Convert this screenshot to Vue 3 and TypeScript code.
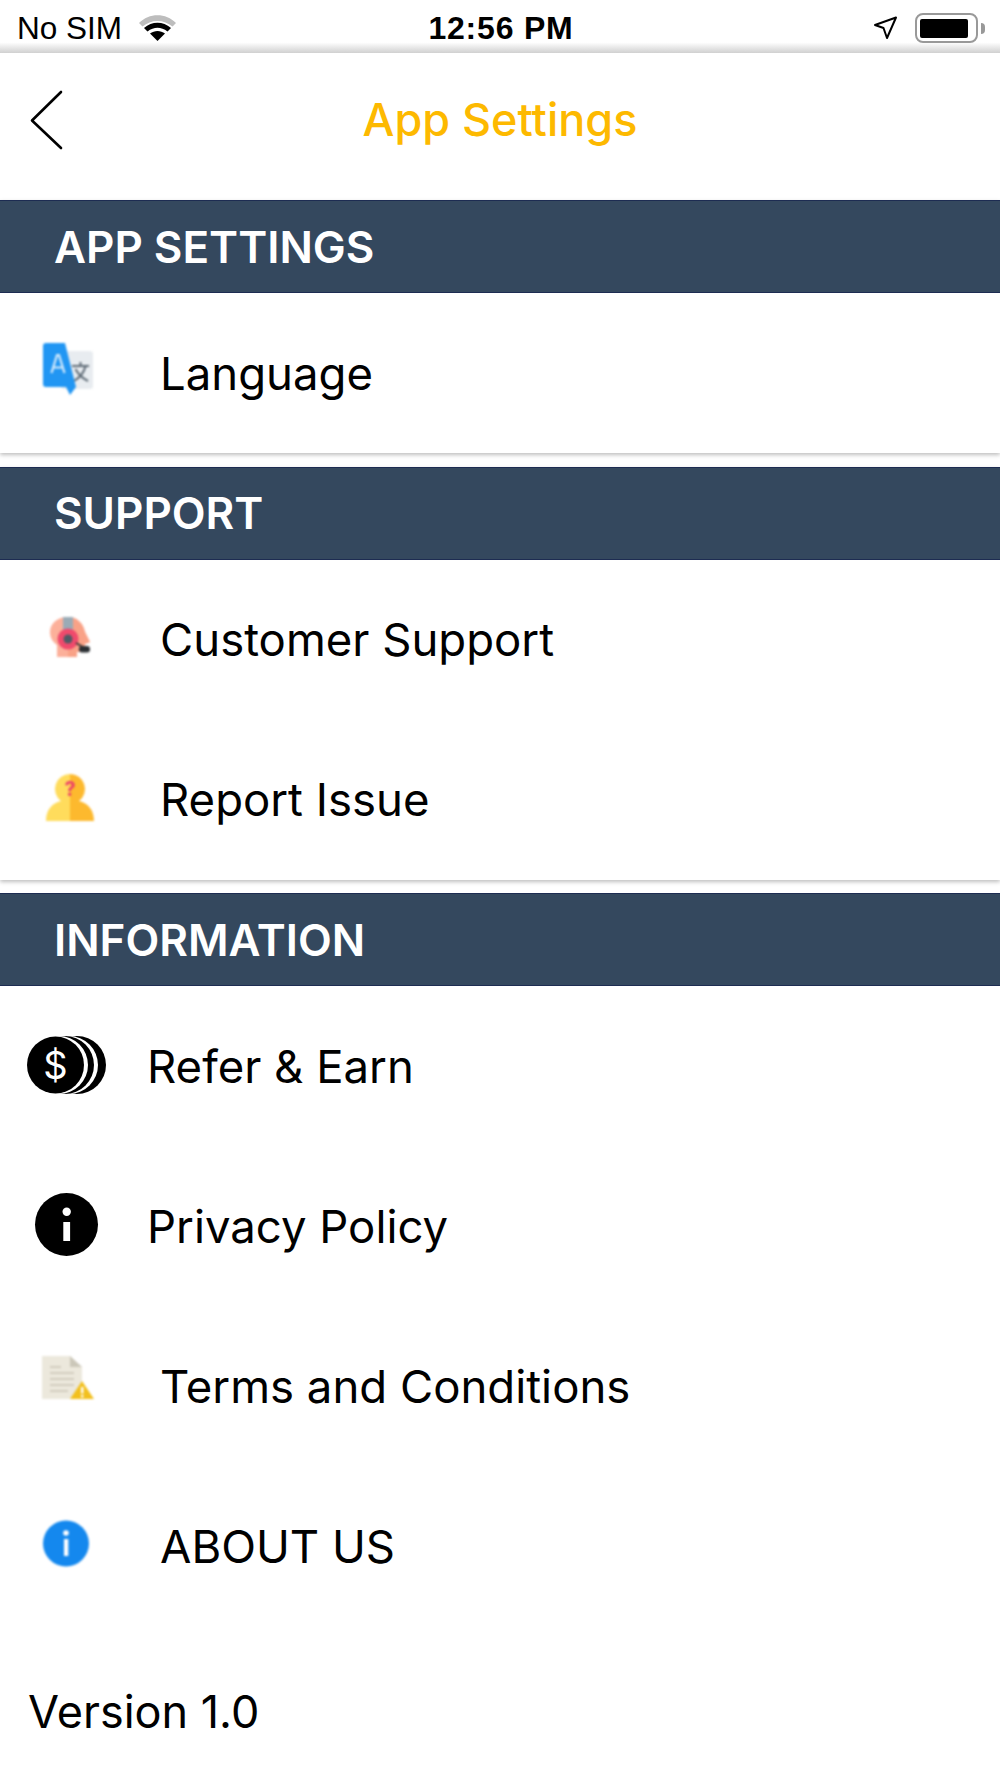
<script setup lang="ts">
interface Row { label: string; icon: string; wide?: boolean }
const sections: { title: string; rows: Row[]; shadow: boolean }[] = [
  { title: 'APP SETTINGS', shadow: true, rows: [{ label: 'Language', icon: 'lang' }] },
  { title: 'SUPPORT', shadow: true, rows: [
    { label: 'Customer Support', icon: 'agent' },
    { label: 'Report Issue', icon: 'report' },
  ] },
  { title: 'INFORMATION', shadow: false, rows: [
    { label: 'Refer & Earn', icon: 'coins', wide: true },
    { label: 'Privacy Policy', icon: 'info', wide: true },
    { label: 'Terms and Conditions', icon: 'terms' },
    { label: 'ABOUT US', icon: 'about' },
  ] },
]
</script>

<template>
  <div class="screen">
    <div class="status">
      <div class="status-left">
        <span class="carrier">No SIM</span>
        <svg class="wifi" width="37" height="26" viewBox="0 0 37 26">
          <path d="M0 8C10 -2.500 27 -2.500 37 8L33.500 11.500C25 4 12 4 3.500 11.500Z" fill="#bdbdbd" />
          <path d="M5 13C13 6 24 6 32 13L28.500 16.500C22 11.500 15 11.500 8.500 16.500Z" fill="#000" />
          <path d="M11 18.500C15.500 15 21.500 15 26 18.500L18.500 26Z" fill="#000" />
        </svg>
      </div>
      <span class="clock">12:56 PM</span>
      <div class="status-right">
        <svg class="arrow" width="24" height="24" viewBox="0 0 24 24">
          <path d="M2 9L23 1.500L14 22L10.500 12Z" fill="none" stroke="#000" stroke-width="2" stroke-linejoin="round" />
        </svg>
        <div class="battery"><div class="battery-fill"></div></div>
        <div class="battery-tip"></div>
      </div>
    </div>

    <div class="nav">
      <svg class="back" width="34" height="60" viewBox="0 0 34 60">
        <path d="M32 2L3 30.500L32 58" fill="none" stroke="#000" stroke-width="2.600" stroke-linecap="round" stroke-linejoin="round" />
      </svg>
      <span class="title">App Settings</span>
    </div>

    <section v-for="s in sections" :key="s.title" :class="['group', { shadowed: s.shadow }]">
      <h2 class="band">{{ s.title }}</h2>
      <div v-for="r in s.rows" :key="r.label" :class="['row', { wide: r.wide }]">
        <svg class="icon" :class="{ soft: !r.wide }" width="134" height="160" viewBox="0 0 134 160">
          <g v-if="r.icon === 'lang'" transform="translate(43 50)">
            <rect x="18" y="8" width="32" height="38" rx="3" fill="#e8ecf0" />
            <path d="M29 23H46M37.500 19V23M42.500 23C41 30 36 35 31 38M32.500 26C35 31 39 35 45 38" fill="none" stroke="#5f6b76" stroke-width="2" />
            <path d="M3 0H22L33 44L27 52L23 44H3A3 3 0 0 1 0 41V3A3 3 0 0 1 3 0Z" fill="#2196f3" />
            <path d="M8.500 30L14 12H16L21.500 30M10.500 24.500H19.500" fill="none" stroke="#d6ebfc" stroke-width="2.200" />
          </g>

          <g v-else-if="r.icon === 'agent'" transform="translate(50 57)">
            <path d="M17 0C7 0 0 7 0 15C0 21 3 25 7 28V40H27V35H32C34 35 35 33 35 31V27L40 25L35 15C33 6 27 0 17 0Z" fill="#fcb09a" />
            <path d="M18 0C27 0 33 6 35 15L40 25L35 27V31C35 33 34 35 32 35H27V40H18Z" fill="#f9a287" />
            <rect x="13" y="0" width="10" height="17" fill="#9aabb6" />
            <circle cx="18" cy="22" r="10.500" fill="#f04a6c" />
            <circle cx="18" cy="22" r="4.500" fill="#4f5a65" />
            <path d="M26 26L33 30" stroke="#333" stroke-width="2" />
            <rect x="29" y="29" width="11" height="6.500" rx="3" fill="#2b2f33" />
          </g>

          <g v-else-if="r.icon === 'report'" transform="translate(46 54)">
            <path d="M24 0A15 15 0 0 0 15 27C6 29 0 36 0 47H24Z" fill="#ffdc5c" />
            <path d="M24 0A15 15 0 0 1 33 27C42 29 48 36 48 47H24Z" fill="#fdb92e" />
            <text x="24" y="22" text-anchor="middle" class="q">?</text>
          </g>

          <g v-else-if="r.icon === 'coins'" transform="translate(27 50)">
            <circle cx="50" cy="29" r="29" fill="#000" />
            <circle cx="42" cy="29" r="29" fill="#fff" />
            <circle cx="38" cy="29" r="29" fill="#000" />
            <circle cx="32" cy="29" r="29" fill="#fff" />
            <circle cx="28.500" cy="29" r="28.500" fill="#000" />
            <text x="28.500" y="43" text-anchor="middle" class="dollar">$</text>
          </g>

          <g v-else-if="r.icon === 'info'">
            <circle cx="66.500" cy="78.500" r="31.500" fill="#000" />
            <circle cx="66.700" cy="65.700" r="4.200" fill="#fff" />
            <rect x="63.300" y="76" width="6.800" height="19" fill="#fff" />
          </g>

          <g v-else-if="r.icon === 'terms'" transform="translate(42 50)">
            <path d="M0 0H28L40 11V43H0Z" fill="#ece8dc" />
            <path d="M28 0L40 11H28Z" fill="#cbc7b9" />
            <path d="M8 11H19M8 17H32M8 23H32M8 29H32M8 35H26" stroke="#d2cdbf" stroke-width="1.800" />
            <path d="M40 25L52 43H28Z" fill="#f2c01e" />
            <rect x="39" y="31" width="2.400" height="6.500" fill="#fff" />
            <rect x="39" y="39" width="2.400" height="2.400" fill="#fff" />
          </g>

          <g v-else-if="r.icon === 'about'">
            <circle cx="66" cy="77.500" r="23" fill="#1488ee" />
            <circle cx="66" cy="67" r="2.800" fill="#fff" />
            <rect x="64" y="73" width="4.300" height="17" fill="#fff" />
          </g>
        </svg>
        <span class="label">{{ r.label }}</span>
      </div>
    </section>

    <div class="version">Version 1.0</div>
  </div>
</template>

<style scoped>
.screen {
  width: 1000px;
  height: 1778px;
  background: #fff;
  font-family: Inter, "Liberation Sans", sans-serif;
  color: #000;
  overflow: hidden;
}
.status {
  height: 53px;
  display: flex;
  align-items: center;
  justify-content: space-between;
  padding: 3px 15px 0 17px;
  box-sizing: border-box;
  font-family: "Liberation Sans", sans-serif;
  font-size: 31.500px;
  background: linear-gradient(#fff 80%, #d0d0d0);
}
.status-left,
.status-right {
  display: flex;
  align-items: center;
  width: 300px;
}
.status-left { gap: 17px; }
.status-right { justify-content: flex-end; }
.clock { font-size: 32px; font-weight: 700; letter-spacing: 0.800px; }
.arrow { margin-right: 18px; }
.battery {
  width: 63px;
  height: 30px;
  border: 2px solid #999;
  border-radius: 8px;
  padding: 4px 8px 3px 3px;
  box-sizing: border-box;
  margin-right: 3px;
}
.battery-fill { width: 100%; height: 100%; background: #000; border-radius: 2px; }
.battery-tip {
  width: 4px;
  height: 11px;
  background: #999;
  border-radius: 0 4px 4px 0;
}
.nav {
  height: 147px;
  box-sizing: border-box;
  padding-bottom: 14px;
  display: flex;
  align-items: center;
  justify-content: center;
  position: relative;
}
.back { position: absolute; left: 29px; top: 37px; }
.title { color: #fdb900; font-size: 45px; font-weight: 500; }
.group.shadowed {
  box-shadow: 0 2px 4px rgba(0, 0, 0, 0.25);
  margin-bottom: 13.500px;
}
.band {
  margin: 0;
  height: 93px;
  box-sizing: border-box;
  background: #34485e;
  border-top: 1px solid #1d2c52;
  border-bottom: 1px solid #1d2c52;
  color: #fff;
  font-size: 44px;
  font-weight: 600;
  padding-left: 54px;
  display: flex;
  align-items: center;
}
.row {
  height: 160px;
  display: flex;
  align-items: center;
  position: relative;
  padding-left: 160px;
}
.row.wide { padding-left: 147px; }
.icon {
  position: absolute;
  left: 0;
  top: 0;
}
.soft { filter: blur(0.8px); }
.label { font-size: 45.500px; }
.version { font-size: 45px; line-height: 54px; padding: 59px 0 0 28px; }
.q { font: 700 20px Inter, sans-serif; fill: #ec3f6a; }
.dollar { font: 400 38px Inter, sans-serif; fill: #fff; }
</style>
